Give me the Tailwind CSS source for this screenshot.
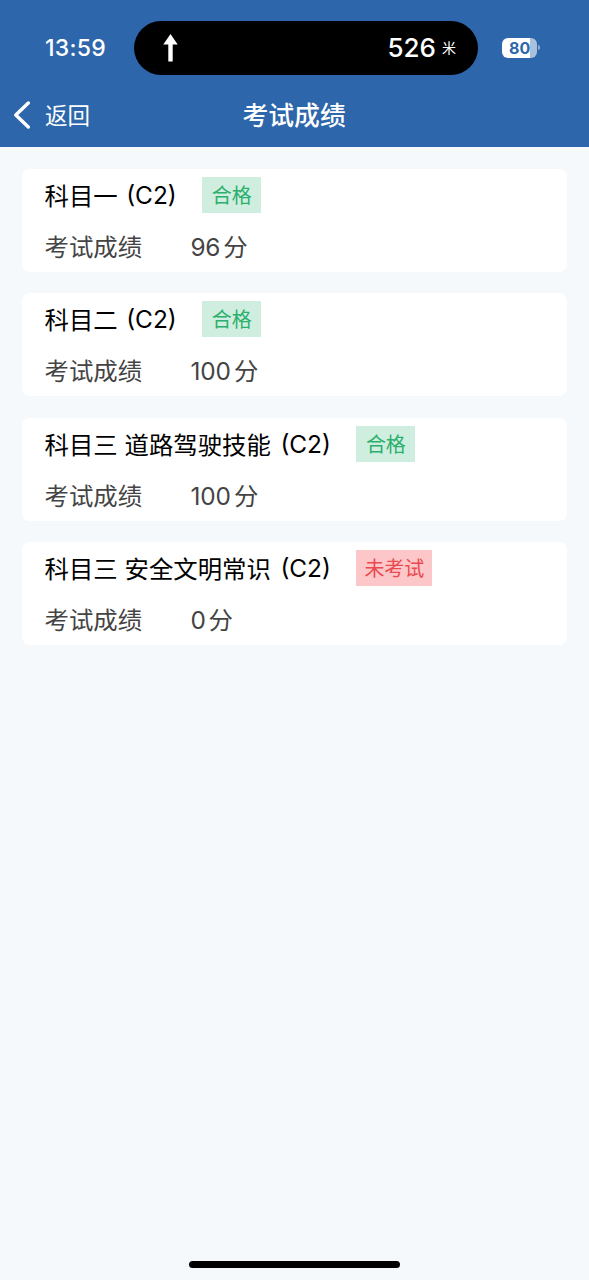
<!DOCTYPE html>
<html lang="zh-CN">
<head>
<meta charset="utf-8">
<title>考试成绩</title>
<script src="https://cdn.jsdelivr.net/npm/@tailwindcss/browser@4"></script>
</head>
<body class="font-['Inter','Noto_Sans_CJK_SC',sans-serif] bg-[#f5f9fb]">
<div class="w-[589px] h-[1280px] flex flex-col overflow-hidden whitespace-nowrap">
  <header class="h-[147px] shrink-0 bg-[#2d66aa] text-white flex flex-col">
    <div class="h-[53px] mt-[21px] flex items-center">
      <div class="w-[134px] pl-[45px] pt-[2px] text-[23px] font-medium leading-none"><span class="tracking-[0.3px]">13:59</span></div>
      <div class="w-[344px] h-[54px] rounded-full bg-black flex items-center pl-[29px] pr-[22px]">
        <svg class="w-[15px] h-[28px]" viewBox="0 0 15 28" fill="white"><path d="M7.5 0 L14.7 10.5 H9.7 V27.5 H5.3 V10.5 H.3 Z"/></svg>
        <div class="ml-auto flex items-center leading-none"><span class="text-[26px] font-medium pt-[1px]">526</span><span class="text-[14px] ml-[6px] pt-[1px]">米</span></div>
      </div>
      <div class="ml-[24px] flex items-center">
        <div class="w-[35px] h-[20px] rounded-[6px] overflow-hidden bg-[linear-gradient(to_right,#fff_28px,#a9c1df_28px)] text-[#2d66aa] text-[16px] font-bold leading-[20px] pl-[7px]">80</div>
        <div class="w-[2px] h-[5px] ml-[1px] rounded-r-full bg-[#8eaed5]"></div>
      </div>
    </div>
    <div class="h-[73px] flex items-center pt-[9px]">
      <svg class="w-[18px] h-[28px] ml-[13px]" viewBox="0 0 18 28" fill="none" stroke="white" stroke-width="3.4" stroke-linecap="round" stroke-linejoin="round"><path d="M15.3 2 L2.8 14 L15.3 26"/></svg>
      <span class="w-[198px] pl-[14px] pt-[3px] text-[22.5px] leading-none">返回</span>
      <h1 class="ml-[13.5px] pt-[2px] text-[25.8px] font-medium leading-none">考试成绩</h1>
    </div>
  </header>
  <main class="px-[22px] pt-[22px] flex flex-col gap-[21.4px] text-[24.4px] text-black">
    <section class="h-[103px] bg-white rounded-[8px] px-[22.5px] pt-[8px]">
      <div class="flex items-center h-[36px] leading-none"><span class="pt-[2px]">科目一</span><span class="ml-[8.5px]">(C2)</span><span class="ml-[25.5px] h-[36px] w-[59px] text-center leading-[38px] text-[20px] bg-[#cfeee0] text-[#2baf6c]">合格</span></div>
      <div class="flex items-center h-[36px] mt-[15px] pt-[2px] leading-none text-[#444]"><span class="w-[146px]">考试成绩</span><span class="tracking-[-0.3px]">96</span><span class="ml-[3px]">分</span></div>
    </section>
    <section class="h-[103px] bg-white rounded-[8px] px-[22.5px] pt-[8px]">
      <div class="flex items-center h-[36px] leading-none"><span class="pt-[2px]">科目二</span><span class="ml-[8.5px]">(C2)</span><span class="ml-[25.5px] h-[36px] w-[59px] text-center leading-[38px] text-[20px] bg-[#cfeee0] text-[#2baf6c]">合格</span></div>
      <div class="flex items-center h-[36px] mt-[15px] pt-[2px] leading-none text-[#444]"><span class="w-[146px]">考试成绩</span><span class="tracking-[-0.1px]">100</span><span class="ml-[3px]">分</span></div>
    </section>
    <section class="h-[103px] bg-white rounded-[8px] px-[22.5px] pt-[8px]">
      <div class="flex items-center h-[36px] leading-none"><span class="pt-[2px]">科目三 道路驾驶技能</span><span class="ml-[9.5px]">(C2)</span><span class="ml-[25.5px] h-[36px] w-[59px] text-center leading-[38px] text-[20px] bg-[#cfeee0] text-[#2baf6c]">合格</span></div>
      <div class="flex items-center h-[36px] mt-[15px] pt-[2px] leading-none text-[#444]"><span class="w-[146px]">考试成绩</span><span class="tracking-[-0.1px]">100</span><span class="ml-[3px]">分</span></div>
    </section>
    <section class="h-[103px] bg-white rounded-[8px] px-[22.5px] pt-[8px]">
      <div class="flex items-center h-[36px] leading-none"><span class="pt-[2px]">科目三 安全文明常识</span><span class="ml-[9.5px]">(C2)</span><span class="ml-[25.5px] h-[36px] w-[76px] text-center leading-[38px] text-[20px] bg-[#fdc7c9] text-[#ea4a4f]">未考试</span></div>
      <div class="flex items-center h-[36px] mt-[15px] pt-[2px] leading-none text-[#444]"><span class="w-[146px]">考试成绩</span><span class="tracking-[-0.3px]">0</span><span class="ml-[3px]">分</span></div>
    </section>
  </main>
  <div class="mt-auto mb-[12px] ml-[189px] w-[211px] h-[7px] rounded-full bg-black shrink-0"></div>
</div>
</body>
</html>
